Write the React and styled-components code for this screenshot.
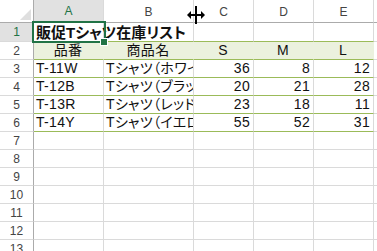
import React from "react";
import styled, { createGlobalStyle, css } from "styled-components";

const Global = createGlobalStyle`
  html, body { margin: 0; padding: 0; background: #ffffff; overflow: hidden; }
  body { width: 377px; height: 251px; }
`;

const GRID = "#dadada";
const HEAD_LINE = "#ababab";
const GREEN = "#217346";
const BAND_LINE = "#9bbb59";
const BAND_BG = "#ebf1de";

const Wrap = styled.div`
  position: relative;
  width: 377px;
  height: 251px;
  overflow: hidden;
  font-family: "Liberation Sans", "Noto Sans CJK JP", sans-serif;
`;

const Sheet = styled.div`
  display: grid;
  grid-template-columns: 34px 70px 90px 60px 60px 60px 1fr;
  grid-template-rows: 23px 19px repeat(12, 18px);
`;

const Corner = styled.div`
  box-sizing: border-box;
  border-right: 1px solid ${HEAD_LINE};
  border-bottom: 1px solid ${HEAD_LINE};
  display: flex;
  align-items: flex-end;
  justify-content: flex-end;
  padding: 0 2px 2px 0;
  &::after {
    content: "";
    width: 11px;
    height: 11px;
    background: #dfdfdf;
    clip-path: polygon(100% 0, 100% 100%, 0 100%);
  }
`;

const ColHeader = styled.div`
  box-sizing: border-box;
  border-right: 1px solid ${GRID};
  border-bottom: 1px solid ${HEAD_LINE};
  display: flex;
  align-items: center;
  justify-content: center;
  font-size: 12px;
  color: #444;
  padding-top: 1px;
  ${(p) =>
    p.$selected &&
    css`
      background: #e1e1e1;
      color: ${GREEN};
      border-bottom: 2px solid ${GREEN};
    `}
`;

const RowHeader = styled.div`
  box-sizing: border-box;
  border-right: 1px solid ${HEAD_LINE};
  border-bottom: 1px solid ${GRID};
  display: flex;
  align-items: center;
  justify-content: center;
  font-size: 12px;
  color: #444;
  ${(p) =>
    p.$selected &&
    css`
      background: #e1e1e1;
      color: ${GREEN};
    `}
`;

const Cell = styled.div`
  box-sizing: border-box;
  border-right: 1px solid ${GRID};
  border-bottom: 1px solid ${(p) => (p.$lineBelow ? BAND_LINE : GRID)};
  font-size: 14px;
  line-height: 17px;
  color: #111;
  white-space: nowrap;
  font-feature-settings: "palt" 1;
  letter-spacing: 0.3px;
  padding: 0 3px 0 2px;
  overflow: ${(p) => (p.$spill ? "visible" : "hidden")};
  text-align: ${(p) => p.$align || "left"};
  ${(p) =>
    p.$band &&
    css`
      background: ${BAND_BG};
      border-right-color: ${BAND_BG};
    `}
  ${(p) =>
    p.$title &&
    css`
      font-weight: bold;
      font-size: 15px;
      line-height: 19px;
      letter-spacing: 0;
      position: relative;
      z-index: 1;
    `}
`;

const Selection = styled.div`
  position: absolute;
  left: 32px;
  top: 21px;
  width: 74px;
  height: 22px;
  box-sizing: border-box;
  border: 2px solid ${GREEN};
  z-index: 2;
  pointer-events: none;
`;

const FillHandle = styled.div`
  position: absolute;
  left: 100px;
  top: 38px;
  width: 6px;
  height: 6px;
  background: ${GREEN};
  border: 1px solid #fff;
  z-index: 3;
`;

const Cursor = styled.svg`
  position: absolute;
  left: 186px;
  top: 4px;
  z-index: 4;
`;

const columns = ["A", "B", "C", "D", "E", ""];

const data = [
  ["T-11W", "Tシャツ（ホワイト）", 36, 8, 12],
  ["T-12B", "Tシャツ（ブラック）", 20, 21, 28],
  ["T-13R", "Tシャツ（レッド）", 23, 18, 11],
  ["T-14Y", "Tシャツ（イエロー）", 55, 52, 31],
];

export default function App() {
  const rows = [];
  rows.push(
    <React.Fragment key="r1">
      <RowHeader $selected>1</RowHeader>
      <Cell $title $spill $lineBelow>販促Tシャツ在庫リスト</Cell>
      <Cell $lineBelow />
      <Cell $lineBelow />
      <Cell $lineBelow />
      <Cell $lineBelow />
      <Cell />
    </React.Fragment>
  );
  rows.push(
    <React.Fragment key="r2">
      <RowHeader>2</RowHeader>
      <Cell $band $lineBelow $align="center">品番</Cell>
      <Cell $band $lineBelow $align="center">商品名</Cell>
      <Cell $band $lineBelow $align="center">S</Cell>
      <Cell $band $lineBelow $align="center">M</Cell>
      <Cell $band $lineBelow $align="center">L</Cell>
      <Cell />
    </React.Fragment>
  );
  data.forEach((r, i) => {
    rows.push(
      <React.Fragment key={"d" + i}>
        <RowHeader>{i + 3}</RowHeader>
        <Cell $lineBelow>{r[0]}</Cell>
        <Cell $lineBelow>{r[1]}</Cell>
        <Cell $lineBelow $align="right">{r[2]}</Cell>
        <Cell $lineBelow $align="right">{r[3]}</Cell>
        <Cell $lineBelow $align="right">{r[4]}</Cell>
        <Cell />
      </React.Fragment>
    );
  });
  for (let n = 7; n <= 14; n++) {
    rows.push(
      <React.Fragment key={"e" + n}>
        <RowHeader>{n}</RowHeader>
        <Cell />
        <Cell />
        <Cell />
        <Cell />
        <Cell />
        <Cell />
      </React.Fragment>
    );
  }

  return (
    <Wrap>
      <Global />
      <Sheet>
        <Corner />
        {columns.map((c, i) => (
          <ColHeader key={i} $selected={c === "A"}>
            {c}
          </ColHeader>
        ))}
        {rows}
      </Sheet>
      <Selection />
      <FillHandle />
      <Cursor width="20" height="22" viewBox="0 0 20 22">
        <rect x="9" y="2" width="2" height="18" fill="#000" />
        <rect x="4" y="10" width="12" height="2" fill="#000" />
        <polygon points="1,11 5,7 5,15" fill="#000" />
        <polygon points="19,11 15,7 15,15" fill="#000" />
      </Cursor>
    </Wrap>
  );
}
